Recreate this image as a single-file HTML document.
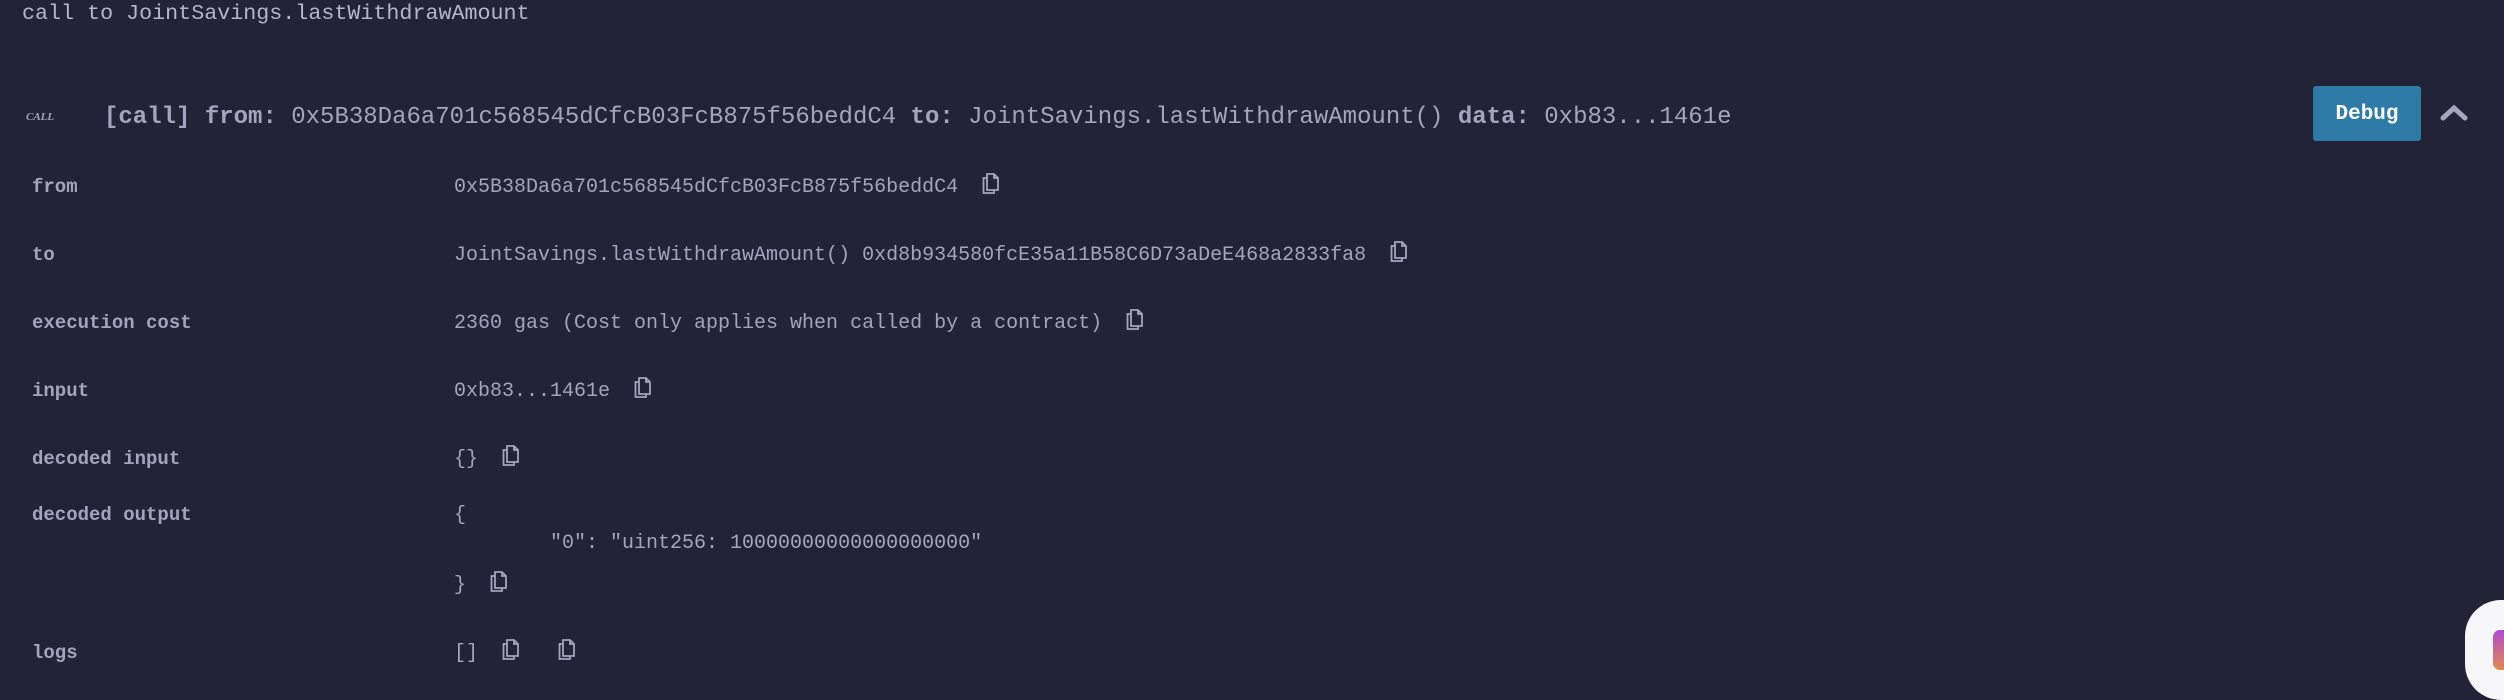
<!DOCTYPE html>
<html><head><style>
html,body{margin:0;padding:0}
body{width:2504px;height:692px;background:#222336;color:#a3a5bd;font-family:"Liberation Mono",monospace;position:relative;overflow:hidden}
.a{position:absolute;white-space:pre;line-height:1}
.l{left:32px;font-weight:bold;font-size:19px}
.v{left:454px;font-size:20px}
.ic{display:inline-block;vertical-align:middle;margin-left:24px;margin-top:-6px}
</style></head><body>
<div class="a" style="left:22px;top:3px;font-size:21.7px;color:#b5b7c8">call to JointSavings.lastWithdrawAmount</div>
<div class="a" style="left:26px;top:112px;font-size:11px;font-style:italic;font-weight:bold;font-family:'Liberation Serif',serif">CALL</div>
<div class="a" style="left:104px;top:106px;font-size:24px"><b>[call]</b> <b>from:</b> 0x5B38Da6a701c568545dCfcB03FcB875f56beddC4 <b>to:</b> JointSavings.lastWithdrawAmount() <b>data:</b> 0xb83...1461e</div>
<div class="a" style="left:2313px;top:86px;width:108px;height:55px;background:#2e7ba8;border-radius:3px;color:#fff;font-weight:bold;font-size:21px;font-family:'Liberation Mono',monospace;line-height:57px;text-align:center">Debug</div>
<svg class="a" style="left:2440px;top:102px" width="28" height="20"><path d="M3 16 L14 6 L25 16" stroke="#a3a5bd" stroke-width="5" fill="none" stroke-linecap="round"/></svg>
<svg width="0" height="0" style="position:absolute"><defs><g id="c"><path d="M5 5 H1.5 V20 H12 V17" fill="none" stroke="#a3a5bd" stroke-width="1.8"/><path d="M5 1 H12 L16 5 V17 H5 Z M12 1 V5 H16" fill="none" stroke="#a3a5bd" stroke-width="1.8"/></g></defs></svg>
<div class="a l" style="top:178px">from</div>
<div class="a v" style="top:178px">0x5B38Da6a701c568545dCfcB03FcB875f56beddC4<svg class="ic" width="18" height="22"><use href="#c"/></svg></div>
<div class="a l" style="top:246px">to</div>
<div class="a v" style="top:246px">JointSavings.lastWithdrawAmount() 0xd8b934580fcE35a11B58C6D73aDeE468a2833fa8<svg class="ic" width="18" height="22"><use href="#c"/></svg></div>
<div class="a l" style="top:314px">execution cost</div>
<div class="a v" style="top:314px">2360 gas (Cost only applies when called by a contract)<svg class="ic" width="18" height="22"><use href="#c"/></svg></div>
<div class="a l" style="top:382px">input</div>
<div class="a v" style="top:382px">0xb83...1461e<svg class="ic" width="18" height="22"><use href="#c"/></svg></div>
<div class="a l" style="top:450px">decoded input</div>
<div class="a v" style="top:450px">{}<svg class="ic" width="18" height="22"><use href="#c"/></svg></div>
<div class="a l" style="top:506px">decoded output</div>
<div class="a v" style="top:506px">{</div>
<div class="a v" style="top:534px">        "0": "uint256: 10000000000000000000"</div>
<div class="a v" style="top:576px">}<svg class="ic" width="18" height="22"><use href="#c"/></svg></div>
<div class="a l" style="top:644px">logs</div>
<div class="a v" style="top:644px">[]<svg class="ic" width="18" height="22"><use href="#c"/></svg><svg class="ic" style="margin-left:38px" width="18" height="22"><use href="#c"/></svg></div>
<div class="a" style="left:2465px;top:600px;width:80px;height:100px;background:#f7f7f9;border-radius:36px"></div>
<div class="a" style="left:2493px;top:630px;width:14px;height:40px;background:linear-gradient(#b04bd0,#e08a50);border-radius:7px 0 0 7px"></div>
</body></html>
